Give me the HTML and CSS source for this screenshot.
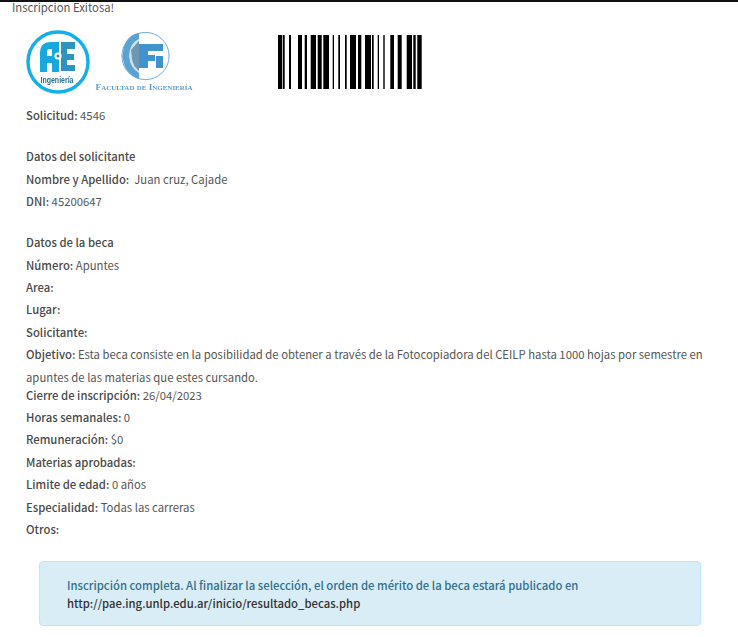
FILE: index.html
```html
<!DOCTYPE html>
<html lang="es">
<head>
<meta charset="utf-8">
<title>Inscripcion</title>
<link rel="stylesheet" href="styles.css">
</head>
<body>
<div class="status">Inscripcion Exitosa!</div>
<main class="content">
  <div class="logos">
    <svg class="logo-pae" viewBox="0 0 64 64" width="64" height="64">
      <circle cx="32" cy="32" r="30" fill="#fff" stroke="#12b0ea" stroke-width="3.4"/>
      <path fill-rule="evenodd" d="M14 42V23Q14 12 25 12H33V42H26V33H21V42ZM21 26H26V19H24Q21 19 21 22Z" fill="#18a8e0"/>
      <path d="M35 12H49V19H41V24H48V30H41V35H49V41H35Z" fill="#2f93c2"/>
      <circle cx="32" cy="26" r="3.6" fill="#fff"/>
      <circle cx="32" cy="26" r="1.5" fill="#1b8fc2"/>
      <text x="31" y="52.5" class="logo-pae-text" text-anchor="middle" textLength="33" lengthAdjust="spacingAndGlyphs">Ingeniería</text>
    </svg>
    <svg class="logo-fi" viewBox="0 0 100 66" width="100" height="66">
      <circle cx="51.5" cy="28" r="23.6" fill="#fff" stroke="#5ba3d4" stroke-width="0.9"/>
      <path d="M45 5Q30 7 28.5 28Q30 46 45 51Z" fill="#5aa2d2"/>
      <path d="M45 11Q36 14 35 28Q36 40 45 45Z" fill="#cfe0ec"/>
      <path d="M37 22Q42 16 45 13V43Q39 38 38 31Z" fill="#6f97b4"/>
      <path d="M45 16H69V23H54V40H45Z" fill="#3f94cd"/>
      <path d="M54 27H61V33H54ZM62 28H69V40H62Z" fill="#3f94cd"/>
      <text x="50" y="61.5" class="logo-fi-text" text-anchor="middle" textLength="97" lengthAdjust="spacingAndGlyphs">Facultad de Ingeniería</text>
    </svg>
    <svg class="barcode" viewBox="0 0 144 54" width="144" height="54">
      <path d="M0 0h4v54H0zM4.7 0h2v54h-2zM11 0h2v54h-2zM20 0h4v54h-4zM26.7 0h2.3v54h-2.3zM32.7 0h5.3v54h-5.3zM39.7 0h4v54h-4zM45.3 0h5.7v54h-5.7zM54.7 0h1.3v54h-1.3zM60.3 0h1.7v54h-1.7zM67 0h1.7v54H67zM72 0h6v54h-6zM80 0h3.3v54H80zM87 0h6v54h-6zM94 0h1.7v54H94zM99.7 0h1.3v54h-1.3zM105.3 0h1.4v54h-1.4zM112.3 0h3.7v54h-3.7zM119.7 0h4v54h-4zM128.7 0h5.3v54h-5.3zM135.3 0h2.4v54h-2.4zM139.3 0h4.4v54h-4.4z" fill="#000"/>
    </svg>
  </div>
  <p class="row"><b>Solicitud:</b> 4546</p>
  <p class="row heading"><b>Datos del solicitante</b></p>
  <p class="row"><b>Nombre y Apellido:</b>&nbsp; Juan cruz, Cajade</p>
  <p class="row"><b>DNI:</b> 45200647</p>
  <p class="row heading"><b>Datos de la beca</b></p>
  <p class="row"><b>Número:</b> Apuntes</p>
  <p class="row"><b>Area:</b></p>
  <p class="row"><b>Lugar:</b></p>
  <p class="row"><b>Solicitante:</b></p>
  <p class="row long"><b>Objetivo:</b> Esta beca consiste en la posibilidad de obtener a través de la Fotocopiadora del CEILP hasta 1000 hojas por semestre en apuntes de las materias que estes cursando.</p>
  <p class="row"><b>Cierre de inscripción:</b> 26/04/2023</p>
  <p class="row"><b>Horas semanales:</b> 0</p>
  <p class="row"><b>Remuneración:</b> $0</p>
  <p class="row"><b>Materias aprobadas:</b></p>
  <p class="row"><b>Limite de edad:</b> 0 años</p>
  <p class="row"><b>Especialidad:</b> Todas las carreras</p>
  <p class="row"><b>Otros:</b></p>
  <div class="notice">
    <b>Inscripción completa. Al finalizar la selección, el orden de mérito de la beca estará publicado en</b><br>
    <b class="url">http://pae.ing.unlp.edu.ar/inicio/resultado_becas.php</b>
  </div>
</main>
</body>
</html>
```
FILE: styles.css
```css
html, body { margin: 0; padding: 0; background: #fff; }
body {
  border-top: 2px solid #111;
  font-family: "Noto Sans CJK SC", "Noto Sans", sans-serif;
  font-size: 11.32px;
  color: #555;
  height: 635px;
  overflow: hidden;
}
.status { padding-left: 12px; height: 20px; line-height: 10px; }
.content { padding: 0 30px 0 26px; }
.logos { display: flex; align-items: flex-start; height: 76px; padding-top: 6px; }
.logo-pae { margin-top: 2px; filter: blur(0.4px); }
.logo-fi { margin-left: 4px; filter: blur(0.5px); }
.barcode { margin-left: 84px; margin-top: 7px; }
.logo-pae-text { font: 700 8.5px "Liberation Sans", sans-serif; fill: #2a6f8f; }
.logo-fi-text { font: 700 8px "Liberation Serif", serif; font-variant: small-caps; fill: #5b9fd0; }
.row { margin: 0; line-height: 22.4px; }
.row b { font-weight: 500; color: #4a4a4a; }
.heading { margin-top: 18.8px; }
.long { margin-bottom: -4.4px; }
.notice {
  margin: 20.4px 7px 0 13px;
  padding: 14px 27px 13px;
  background: #d9edf7;
  border: 1px solid #bce8f1;
  border-radius: 4px;
  line-height: 18px;
  color: #31708f;
}
.notice b { font-weight: 500; }
.notice .url { color: #333; }
```
